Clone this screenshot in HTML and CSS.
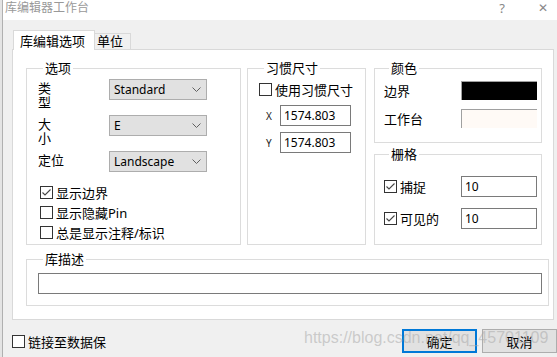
FILE: index.html
```html
<!DOCTYPE html>
<html lang="zh-CN">
<head>
    <meta charset="UTF-8">
    <title>库编辑器工作台</title>
    <link rel="stylesheet" href="styles.css">
</head>
<body>
    <div class="window">
        <div class="titlebar">
            <span class="title">库编辑器工作台</span>
            <span class="help">?</span>
            <span class="close">&#x2715;</span>
        </div>
        <div class="client">
            <div class="tabs">
                <div class="tab active">库编辑选项</div>
                <div class="tab">单位</div>
            </div>
            <div class="panel">
                <div class="groups">
                    <fieldset class="grp grp-opts">
                        <legend>选项</legend>
                        <div class="row">
                            <span class="lbl">类<br>型</span>
                            <div class="select">Standard<svg width="9" height="5" viewBox="0 0 9 5"><polyline points="0.5,0.5 4.5,4.5 8.5,0.5" fill="none" stroke="#606060"/></svg></div>
                        </div>
                        <div class="row">
                            <span class="lbl">大<br>小</span>
                            <div class="select">E<svg width="9" height="5" viewBox="0 0 9 5"><polyline points="0.5,0.5 4.5,4.5 8.5,0.5" fill="none" stroke="#606060"/></svg></div>
                        </div>
                        <div class="row">
                            <span class="lbl">定位</span>
                            <div class="select">Landscape<svg width="9" height="5" viewBox="0 0 9 5"><polyline points="0.5,0.5 4.5,4.5 8.5,0.5" fill="none" stroke="#606060"/></svg></div>
                        </div>
                        <div class="checks">
                            <label class="cb"><span class="box"><svg width="11" height="11" viewBox="0 0 11 11"><polyline points="1.5,5.5 4,8 9.5,2.5" fill="none" stroke="#454545" stroke-width="1.1"/></svg></span>显示边界</label>
                            <label class="cb"><span class="box"></span>显示隐藏Pin</label>
                            <label class="cb"><span class="box"></span>总是显示注释/标识</label>
                        </div>
                    </fieldset>

                    <fieldset class="grp grp-size">
                        <legend>习惯尺寸</legend>
                        <label class="cb"><span class="box"></span>使用习惯尺寸</label>
                        <div class="xy">
                            <span class="axis">X</span>
                            <div class="field">1574.803</div>
                        </div>
                        <div class="xy">
                            <span class="axis">Y</span>
                            <div class="field">1574.803</div>
                        </div>
                    </fieldset>

                    <div class="col-right">
                        <fieldset class="grp grp-color">
                            <legend>颜色</legend>
                            <div class="crow">
                                <span class="clbl">边界</span>
                                <div class="swatch swatch-black"></div>
                            </div>
                            <div class="crow">
                                <span class="clbl">工作台</span>
                                <div class="swatch swatch-work"></div>
                            </div>
                        </fieldset>
                        <fieldset class="grp grp-grid">
                            <legend>栅格</legend>
                            <div class="grow">
                                <label class="cb"><span class="box"><svg width="11" height="11" viewBox="0 0 11 11"><polyline points="1.5,5.5 4,8 9.5,2.5" fill="none" stroke="#454545" stroke-width="1.1"/></svg></span>捕捉</label>
                                <div class="field">10</div>
                            </div>
                            <div class="grow">
                                <label class="cb"><span class="box"><svg width="11" height="11" viewBox="0 0 11 11"><polyline points="1.5,5.5 4,8 9.5,2.5" fill="none" stroke="#454545" stroke-width="1.1"/></svg></span>可见的</label>
                                <div class="field">10</div>
                            </div>
                        </fieldset>
                    </div>
                </div>

                <fieldset class="grp grp-desc">
                    <legend>库描述</legend>
                    <div class="field desc"></div>
                </fieldset>
            </div>

            <div class="footer">
                <label class="cb"><span class="box"></span>链接至数据保</label>
                <div class="buttons">
                    <button class="btn default">确定</button>
                    <button class="btn">取消</button>
                </div>
            </div>
        </div>
        <div class="watermark">https://blog.csdn.net/qq_45701109</div>
    </div>
</body>
</html>
```

FILE: styles.css
```css
* {
    box-sizing: border-box;
}
body {
    margin: 0;
    width: 557px;
    height: 357px;
    overflow: hidden;
    background-color: #e4e4e4;
    font-family: "Noto Sans", "Noto Sans CJK SC", sans-serif;
    font-size: 13px;
    color: #000;
}
.window {
    position: relative;
    margin-left: 2px;
    height: 357px;
    border-left: 1px solid #b0b0b0;
    background-color: #f0f0f0;
}
.titlebar {
    display: flex;
    align-items: center;
    height: 20px;
    background-color: #fff;
    color: #999;
    font-size: 12px;
    line-height: 14px;
}
.titlebar .title {
    padding-left: 2px;
    padding-bottom: 5px;
}
.titlebar .help {
    margin-left: auto;
    margin-right: 33px;
    padding-bottom: 5px;
    font-size: 13px;
    color: #888;
}
.titlebar .close {
    margin-right: 9px;
    padding-bottom: 5px;
    font-size: 12px;
    color: #888;
}
.client {
    padding-left: 9px;
}
.tabs {
    display: flex;
    align-items: flex-end;
    margin-top: 11px;
    height: 18px;
    margin-left: 1px;
}
.tab {
    height: 16px;
    line-height: 14px;
    border: 1px solid #d9d9d9;
    border-bottom: none;
    border-left: none;
    background-color: #f0f0f0;
    padding-left: 2px;
    width: 36px;
}
.tab.active {
    position: relative;
    z-index: 1;
    height: 20px;
    margin-bottom: -1px;
    border-left: 1px solid #d9d9d9;
    background-color: #fff;
    width: 82px;
    padding-left: 6px;
    padding-top: 3px;
}
.panel {
    width: 542px;
    height: 271px;
    border: 1px solid #d9d9d9;
    background-color: #fff;
    padding: 11px 0 0 13px;
}
.groups {
    display: flex;
    height: 184px;
}
.grp {
    margin: 0;
    padding: 0;
    min-width: 0;
    border: 1px solid #dcdcdc;
}
.grp legend {
    margin-left: 5px;
    padding: 0 2px;
    line-height: 14px;
}
.grp-opts {
    width: 215px;
    margin-right: 6px;
    padding: 4px 0 0 11px;
}
.row {
    display: flex;
    height: 21px;
    margin-bottom: 15px;
}
.lbl {
    width: 71px;
    padding-top: 2px;
    line-height: 14px;
}
.select {
    display: flex;
    align-items: center;
    justify-content: space-between;
    width: 98px;
    height: 21px;
    padding: 0 5px 0 4px;
    border: 1px solid #adadad;
    background-color: #e1e1e1;
    font-size: 12px;
}
.checks {
    margin-top: -1px;
    padding-left: 2px;
}
.checks .cb {
    margin-bottom: 7px;
}
.cb {
    display: flex;
    align-items: center;
    height: 13px;
    line-height: 14px;
    white-space: nowrap;
}
.box {
    flex: none;
    width: 13px;
    height: 13px;
    margin-right: 3px;
    border: 1px solid #333;
    background-color: #fff;
}
.box svg {
    display: block;
}
.grp-size {
    width: 119px;
    margin-right: 8px;
    padding: 8px 0 0 11px;
}
.xy {
    display: flex;
    align-items: center;
    margin-top: 9px;
}
.xy + .xy {
    margin-top: 6px;
}
.axis {
    width: 14px;
    padding-left: 7px;
    font-size: 10px;
    color: #222;
    box-sizing: content-box;
}
.field {
    height: 21px;
    border: 1px solid #7a7a7a;
    background-color: #fff;
    padding-left: 3px;
    font-size: 12px;
    line-height: 19px;
}
.xy .field {
    width: 71px;
}
.col-right {
    display: flex;
    flex-direction: column;
    width: 168px;
}
.grp-color {
    height: 82px;
    padding: 6px 0 0 9px;
}
.crow {
    display: flex;
    align-items: center;
    height: 19px;
    margin-bottom: 9px;
}
.clbl {
    width: 77px;
    line-height: 14px;
}
.swatch {
    width: 76px;
    height: 19px;
    border-top: 1px solid #a0a0a0;
    border-left: 1px solid #a0a0a0;
}
.swatch-black {
    background-color: #000;
}
.swatch-work {
    background-color: #fffaf6;
}
.grp-grid {
    flex: 1;
    margin-top: 4px;
    padding: 15px 0 0 9px;
}
.grow {
    display: flex;
    align-items: center;
    height: 21px;
    margin-bottom: 11px;
}
.grow .cb {
    width: 77px;
}
.grow .field {
    width: 76px;
}
.grp-desc {
    width: 523px;
    height: 54px;
    margin-top: 7px;
    padding: 7px 0 0 11px;
}
.field.desc {
    width: 504px;
}
.footer {
    display: flex;
    align-items: center;
    padding-top: 9px;
}
.footer .cb {
    margin-top: 1px;
}
.buttons {
    display: flex;
    gap: 5px;
    margin-left: auto;
}
.btn {
    width: 75px;
    height: 24px;
    padding: 0;
    border: 1px solid #adadad;
    background-color: #e1e1e1;
    font-family: "Noto Sans", "Noto Sans CJK SC", sans-serif;
    font-size: 13px;
    color: #000;
}
.btn.default {
    border: 2px solid #0078d7;
}
.watermark {
    position: absolute;
    left: 301px;
    top: 329px;
    font-family: "Liberation Sans", Arial, sans-serif;
    font-size: 16px;
    color: rgba(170, 170, 170, 0.55);
    white-space: nowrap;
    pointer-events: none;
}
```
